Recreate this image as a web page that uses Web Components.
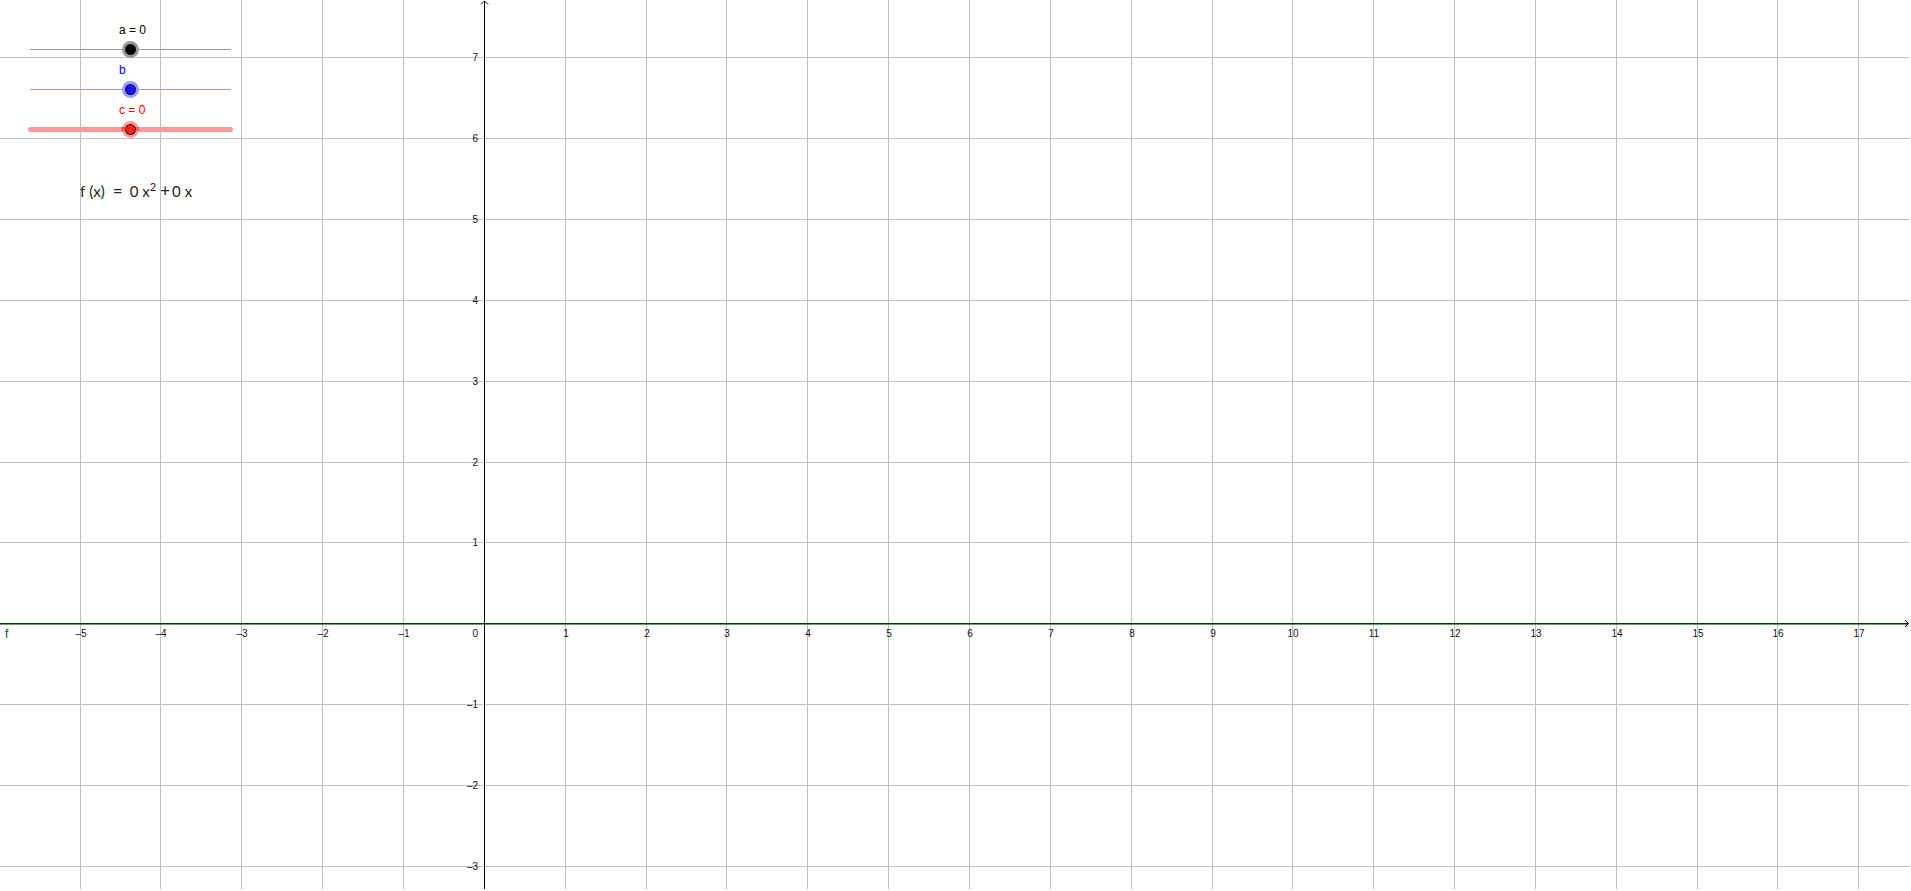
<!DOCTYPE html>
<html lang="en">
<head>
<meta charset="utf-8">
<title>f(x)</title>
<style>
  html, body { height: 100%; margin: 0; }
  body { box-sizing: border-box; padding: 0 2px 2px 0; font-family: "Liberation Sans", Arial, sans-serif; background: #fff; overflow: hidden; }
</style>
</head>
<body>
<graph-view>
  <slider-control name="a" value="0" color="#000" line="#999"></slider-control>
  <slider-control name="b" color="#00f" line="#99f" fill="#1414ff"></slider-control>
  <slider-control name="c" value="0" color="#f00" line="#f99" fill="#ff2020" thickness="5">
    <span>B</span><span>A</span>
  </slider-control>
  <function-formula slot="formula"></function-formula>
</graph-view>

<script>
const UNIT = 80.85;
const ORIGIN_X = 484.35;
const ORIGIN_Y = 623.7;

class GraphView extends HTMLElement {
  constructor() {
    super();
    this.attachShadow({ mode: 'open' });
    this.shadowRoot.innerHTML = `
      <style>
        :host { display: block; position: relative; height: 100%; overflow: hidden; }
        svg { position: absolute; inset: 0; width: 100%; height: 100%; }
        text { font-size: 10px; fill: #111; }
        .grid { stroke: #c0c0c0; }
        .axis { stroke: #000; fill: none; }
        .curve { stroke: #006400; stroke-opacity: 0.6; stroke-width: 2; }
        .name { font-size: 12px; fill: #006400; }
        .panel { position: relative; display: flex; flex-direction: column; width: 209px; padding: 19px 0 0 26px; }
        .formula { padding: 40px 0 0 54px; }
      </style>
      <svg></svg>
      <div class="panel">
        <slot></slot>
        <div class="formula"><slot name="formula"></slot></div>
      </div>
    `;
  }

  connectedCallback() {
    this.draw();
    window.addEventListener('resize', () => this.draw());
  }

  draw() {
    const w = this.clientWidth;
    const h = this.clientHeight;
    const x0 = Math.floor(ORIGIN_X);
    const y0 = Math.floor(ORIGIN_Y);
    let lines = '';
    let labels = '';

    for (let n = Math.ceil(-ORIGIN_X / UNIT); ORIGIN_X + n * UNIT < w; n++) {
      const x = Math.floor(ORIGIN_X + n * UNIT);
      if (n === 0) continue;
      lines += `<path class="grid" d="M${x + 0.5} 0V${h}"/>`;
      labels += `<text x="${x + 1}" y="${y0 + 14}" text-anchor="middle">${this.format(n)}</text>`;
    }
    for (let n = Math.ceil((ORIGIN_Y - h) / UNIT); ORIGIN_Y - n * UNIT > 0; n++) {
      const y = Math.floor(ORIGIN_Y - n * UNIT);
      if (n === 0) continue;
      lines += `<path class="grid" d="M0 ${y + 0.5}H${w}"/>`;
      labels += `<text x="${x0 - 6}" y="${y + 4}" text-anchor="end">${this.format(n)}</text>`;
    }
    labels += `<text x="${x0 - 6}" y="${y0 + 14}" text-anchor="end">0</text>`;

    this.shadowRoot.querySelector('svg').innerHTML = `
      ${lines}
      <path class="axis" d="M${x0 + 0.5} 1V${h}M${x0 - 3} 4.5l3.5 -3.5l3.5 3.5"/>
      <path class="axis" d="M0 ${y0 + 0.5}H${w - 1}M${w - 4} ${y0 - 3}l3.5 3.5l-3.5 3.5"/>
      ${labels}
      <path class="curve" d="M0 ${y0 + 1}H${w - 2}"/>
      <text class="name" x="5" y="${y0 + 15}">f</text>
    `;
  }

  format(n) {
    return n < 0 ? `–${-n}` : `${n}`;
  }
}

class SliderControl extends HTMLElement {
  constructor() {
    super();
    this.attachShadow({ mode: 'open' });
  }

  connectedCallback() {
    const name = this.getAttribute('name');
    const color = this.getAttribute('color');
    const line = this.getAttribute('line');
    const fill = this.getAttribute('fill') || color;
    const size = this.getAttribute('thickness') || 1;
    const text = this.hasAttribute('value') ? `${name} = ${this.getAttribute('value')}` : name;
    this.shadowRoot.innerHTML = `
      <style>
        :host { display: flex; flex-direction: column; position: relative; height: 40px; }
        label { padding-left: 93px; font-size: 12px; line-height: 22px; height: 20px; color: ${color}; }
        input {
          -webkit-appearance: none; appearance: none;
          width: 100%; height: 20px; margin: 0; background: none;
        }
        input::-webkit-slider-runnable-track {
          height: ${size}px; margin: 0 ${size > 1 ? 2 : 4}px; border-radius: 3px; background: ${line};
        }
        input::-webkit-slider-thumb {
          -webkit-appearance: none;
          box-sizing: border-box; width: 17px; height: 17px;
          margin-top: ${(size - 17) / 2}px;
          border: 3px solid ${line}; border-radius: 50%;
          background: ${fill}; box-shadow: inset 0 0 0 1px #111;
        }
        /* tiny point names on both sides of the thumb */
        .points {
          position: absolute; inset: 20px 0 0 0;
          display: flex; justify-content: center; align-items: center; gap: 10px;
          font-size: 6px; line-height: 20px; color: ${color}; pointer-events: none;
        }
      </style>
      <label for="range">${text}</label>
      <input id="range" type="range" min="-5" max="5" value="0" step="0.1">
      <div class="points"><slot></slot></div>
    `;
  }
}

class FunctionFormula extends HTMLElement {
  constructor() {
    super();
    this.attachShadow({ mode: 'open' });
    this.shadowRoot.innerHTML = `
      <style>
        :host {
          display: flex; align-items: baseline; white-space: nowrap;
          font: 15px/24px Lato, sans-serif; color: #222;
        }
        .arg { margin-left: 4px; }
        .eq { margin: 0 7px 0 8px; font-size: 17px; }
        .x { margin-left: 4px; }
        sup { font-size: 11px; line-height: 1; vertical-align: 6px; }
        .plus { margin: 0 2px 0 4px; font-size: 17px; }
      </style>
      <span>f</span><span class="arg">(x)</span><span class="eq">=</span>
      <span>0</span><span class="x">x<sup>2</sup></span>
      <span class="plus">+</span><span>0</span><span class="x">x</span>
    `;
  }
}

customElements.define('graph-view', GraphView);
customElements.define('slider-control', SliderControl);
customElements.define('function-formula', FunctionFormula);
</script>
</body>
</html>
